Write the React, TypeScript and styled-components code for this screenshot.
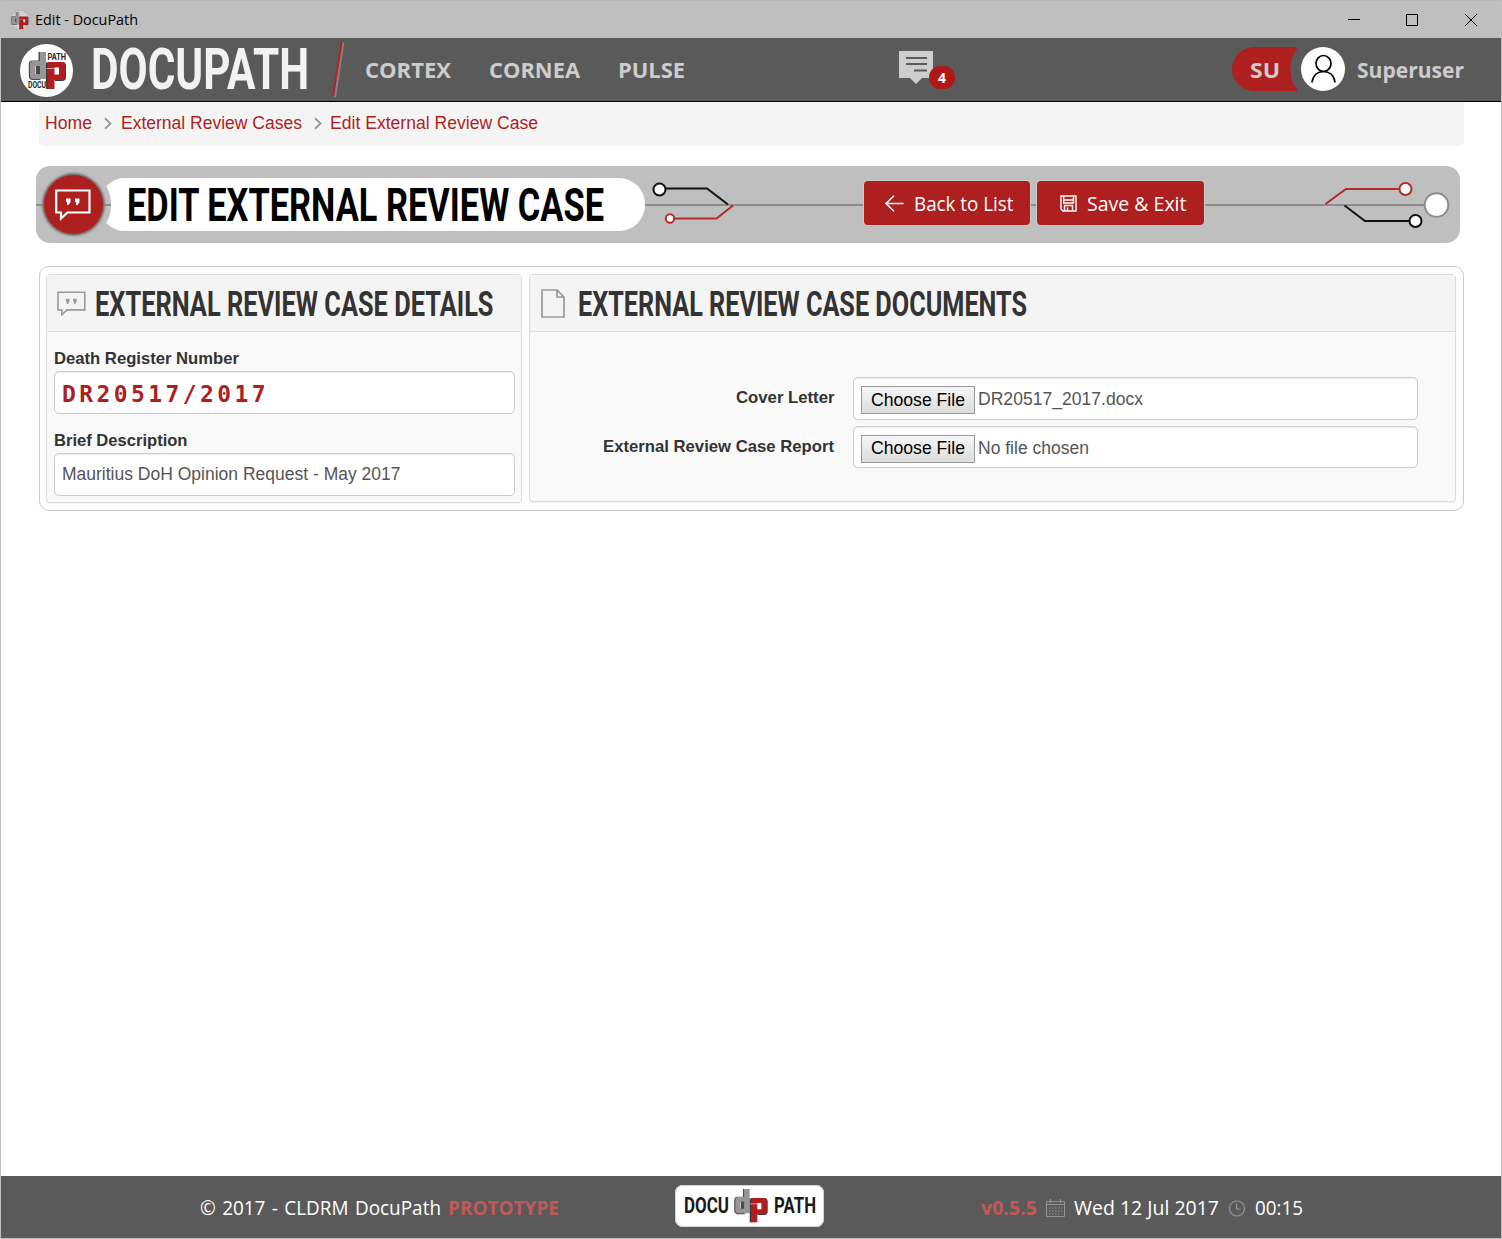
import React, { useLayoutEffect, useRef, useState } from "react";
import styled, { createGlobalStyle, css } from "styled-components";

const RED = "#ae1f1f";
const GREY = "#bfbfbf";
const ui = `"Open Sans", "Noto Sans", sans-serif`;
const arial = `"Liberation Sans", Arial, sans-serif`;
const display = `Roboto, "Liberation Sans", sans-serif`;

const GlobalStyle = createGlobalStyle`
  * { box-sizing: border-box; }
  body { margin: 0; background: #fff; font-family: ${arial}; }
`;

/* ---------- text that is squeezed to a given width ---------- */

const FitBox = styled.span<{ $width: number }>`
  display: block;
  flex: none;
  width: ${(p) => p.$width}px;
  white-space: nowrap;
`;
const FitInner = styled.span`
  display: inline-block;
  transform-origin: 0 50%;
`;

function Fit({ width, children }: { width: number; children: string }) {
  const ref = useRef<HTMLSpanElement>(null);
  const [scale, setScale] = useState(1);
  useLayoutEffect(() => {
    if (!ref.current) return;
    const natural = parseFloat(getComputedStyle(ref.current).width);
    if (natural > 0) setScale(width / natural);
  }, [width, children]);
  return (
    <FitBox $width={width}>
      <FitInner ref={ref} style={{ transform: `scaleX(${scale})` }}>
        {children}
      </FitInner>
    </FitBox>
  );
}

/* ---------- window ---------- */

const Window = styled.div`
  width: 1502px;
  height: 1239px;
  display: flex;
  flex-direction: column;
  border: 1px solid ${GREY};
  border-top-color: #b8b8b8;
  background: #fff;
  overflow: hidden;
`;
const TitleBar = styled.div`
  flex: none;
  height: 37px;
  display: flex;
  align-items: center;
  padding: 0 23px 0 9px;
  background: ${GREY};
  color: #000;
  font: 14px/20px ${ui};
`;
const WindowTitle = styled.div`
  margin-left: 5px;
  flex: 1;
`;
const WindowButtons = styled.div`
  display: flex;
  gap: 45px;
`;

const Header = styled.header`
  flex: none;
  height: 64px;
  display: flex;
  align-items: center;
  background: #5a5a5a;
  border-bottom: 1px solid #000;
  padding: 0 0 2px 18px;
  color: #cdcdcd;
  font: 700 22px/30px ${ui};
`;
const LogoSlot = styled.div`
  display: flex;
  margin-top: 3px;
`;
const Brand = styled.div`
  margin-left: 17px;
  margin-top: 1px;
  color: #f2f2f2;
  font: 700 58px/60px ${display};
`;
const SlashSlot = styled.div`
  display: flex;
  margin-left: 22px;
`;
const Nav = styled.nav`
  display: flex;
  gap: 38px;
  margin-left: 20px;
`;
const Messages = styled.div`
  position: relative;
  display: flex;
  margin-left: 214px;
  margin-top: -2px;
`;
const Badge = styled.span`
  position: absolute;
  left: 30px;
  top: 15px;
  width: 26px;
  height: 23px;
  border-radius: 12px;
  background: #b01717;
  color: #fff;
  font: 700 14px/23px ${ui};
  text-align: center;
`;
const User = styled.div`
  display: flex;
  align-items: center;
  margin-left: auto;
  padding-right: 37px;
`;
const Role = styled.div`
  width: 65px;
  height: 44px;
  padding: 7px 0 0 18px;
  border-radius: 22px 0 0 22px;
  background: radial-gradient(circle at 92px 50%, transparent 33.3px, ${RED} 34px);
`;
const Avatar = styled.div`
  width: 44px;
  height: 44px;
  margin: 0 12px 0 4px;
  border-radius: 50%;
  background: #fff;
  display: flex;
  align-items: center;
  justify-content: center;
`;

const Content = styled.main`
  flex: 1;
  padding: 0 37px 0 38px;
`;
const Breadcrumbs = styled.nav`
  height: 44px;
  display: flex;
  align-items: center;
  padding: 0 0 2px 6px;
  border-radius: 0 0 5px 5px;
  background: #f4f4f4;
  color: ${RED};
  font: 17.5px/22px ${arial};
`;
const Separator = styled.span`
  display: flex;
  margin-left: 12px;
  margin-right: 8.5px;
`;

/* ---------- title banner ---------- */

const Banner = styled.section`
  width: 1424px;
  height: 77px;
  margin: 20px 0 0 -3px;
  display: flex;
  align-items: center;
  border-radius: 14px;
  background: linear-gradient(#8c8c8c, #8c8c8c) 0 38px / 1390px 2px no-repeat ${GREY};
`;
const BannerIcon = styled.div`
  flex: none;
  width: 61px;
  height: 61px;
  margin-left: 7px;
  padding-right: 1px;
  border-radius: 50%;
  border: 1px solid #777;
  box-shadow: 0 0 2px 1px #777;
  background: ${RED};
  display: flex;
  align-items: center;
  justify-content: center;
`;
const BannerTitle = styled.h1`
  flex: none;
  width: 545px;
  height: 53px;
  margin: 0 0 0 -4px;
  padding-left: 27px;
  border-radius: 24px 26px 26px 24px / 26px;
  background: radial-gradient(circle at -27px 50%, transparent 37.5px, #fff 38.5px);
  color: #000;
  font: 700 47px/54px ${display};
`;
const Actions = styled.div`
  display: flex;
  gap: 7px;
  margin-left: 128px;
  margin-top: -3px;
`;
const Button = styled.button<{ $width: number }>`
  width: ${(p) => p.$width}px;
  height: 44px;
  padding: 1px 0 0 20px;
  display: flex;
  align-items: center;
  border: 0;
  border-radius: 4px;
  box-shadow: 0 0 0 1px #cacaca;
  background: ${RED};
  color: #fff;
  font: 19.5px/28px ${ui};
`;
const ButtonIcon = styled.span`
  display: flex;
  width: 29.5px;
`;
const CircuitEnd = styled.div`
  display: flex;
  margin-left: auto;
  margin-right: 10px;
`;

/* ---------- panels ---------- */

const Panels = styled.div`
  height: 245px;
  margin-top: 23px;
  padding: 7px 7px 0 6px;
  display: flex;
  align-items: flex-start;
  gap: 7px;
  border: 1px solid #ccc;
  border-radius: 10px;
`;
const Panel = styled.section<{ $width?: number }>`
  ${(p) => (p.$width ? css`flex: none; width: ${p.$width}px; height: 229px;` : css`flex: 1; height: 228px;`)}
  border: 1px solid #ddd;
  border-radius: 4px;
  background: #f9f9f9;
  box-shadow: 0 1px 1px rgba(0, 0, 0, 0.05);
`;
const PanelHead = styled.h2<{ $gap: number }>`
  height: 57px;
  margin: 0;
  display: flex;
  align-items: center;
  gap: ${(p) => p.$gap}px;
  padding: 1px 0 0 10px;
  border-bottom: 1px solid #ddd;
  background: #f4f4f4;
  color: #333;
  font: 700 35.5px/40px ${display};
`;
const FieldStack = styled.div`
  padding: 0 6px 0 7px;
`;
const Label = styled.label`
  display: block;
  color: #333;
  font: 700 16.5px/20px ${arial};
`;
const StackedLabel = styled(Label)`
  padding: 16px 0 3px;
  height: 39px;
`;
const Control = styled.div<{ $height: number }>`
  height: ${(p) => p.$height}px;
  display: flex;
  align-items: center;
  padding: 0 0 1px 7px;
  border: 1px solid #ccc;
  border-radius: 5px;
  background: #fff;
  box-shadow: inset 0 1px 1px rgba(0, 0, 0, 0.075);
  color: #555;
  font: 17.5px/22px ${arial};
`;
const CaseNumber = styled.span`
  margin-top: 4px;
  color: ${RED};
  font: 700 23px/28px "DejaVu Sans Mono", monospace;
  letter-spacing: 3.4px;
`;
const FileRows = styled.div`
  display: grid;
  grid-template-columns: 304px 565px;
  column-gap: 19px;
  row-gap: 6px;
  padding-top: 45px;
  align-items: center;
`;
const RowLabel = styled(Label)`
  display: flex;
  justify-content: flex-end;
  margin-bottom: 3px;
`;
const FileControl = styled(Control)`
  align-items: flex-start;
  padding: 0 0 0 7px;
`;
const ChooseFile = styled.span<{ $lift?: boolean }>`
  width: 114px;
  height: 28px;
  margin: 8px 3px 0 0;
  padding-left: 9px;
  border: 1px solid #999;
  background: linear-gradient(#f6f6f6, #dcdcdc);
  color: #000;
  line-height: ${(p) => (p.$lift ? 24 : 26)}px;
`;
const FileName = styled.span`
  margin-top: 10px;
`;

/* ---------- footer ---------- */

const Footer = styled.footer`
  flex: none;
  height: 62px;
  display: flex;
  align-items: center;
  padding-left: 199px;
  background: #5a5a5a;
  color: #fff;
  font: 19.5px/28px ${ui};
`;
const Strong = styled.strong`
  color: #c05a5a;
`;
const FooterText = styled.div`
  display: flex;
  gap: 7px;
  width: 475px;
  padding-top: 1px;
  word-spacing: 1.5px;
`;
const FooterLogo = styled.div`
  width: 149px;
  height: 42px;
  margin-top: -2px;
  display: flex;
  align-items: center;
  padding-left: 9px;
  border-radius: 8px;
  background: #fff;
  box-shadow: inset 0 0 0 1px #d4d4d4;
  color: #1a1a1a;
  font: 700 21.5px/28px ${display};
`;
const FooterInfo = styled.div`
  display: flex;
  align-items: center;
  gap: 9px;
  margin-left: 156.5px;
  padding-top: 1px;
`;

/* ---------- drawings ---------- */

const Monogram = () => (
  <g fillRule="evenodd">
    <path d="M10.500 0H12.500V28H4Q.8 27 .8 24V12Q.8 9 3.500 8.500H10.500zM5 14V22H8V14z" fill="#4a4a4a" />
    <path d="M12 0H18V27H5.500Q2 27 2 24V12Q2 9 5.500 9H12zM7.500 14V22H12V14z" fill="#969696" />
    <path d="M18 10.500V37H22V10.500zM34 10Q38 10 38 14V25Q38 29 34 29H27V27H34z" fill="#3a3a3a" />
    <path d="M19.500 10H34Q37 10 37 13V25Q37 28 34 28H26.500V37H19.500zM26.500 15.500V22.500H31V15.500z" fill="#b01f1f" />
    <path d="M18.500 16.500H26.500" stroke="#fff" strokeWidth=".8" opacity=".7" />
  </g>
);

const RoundLogo = () => (
  <svg width="55" height="55" viewBox="0 0 55 55">
    <circle cx="27.500" cy="27.500" r="26.500" fill="#fff" />
    <g transform="translate(9 9)"><Monogram /></g>
    <text x="28.500" y="16.500" fontFamily="Roboto" fontWeight="700" fontSize="8.500" textLength="18.500" lengthAdjust="spacingAndGlyphs" fill="#222">PATH</text>
    <text x="9" y="44.500" fontFamily="Roboto" fontWeight="700" fontSize="8.500" textLength="18" lengthAdjust="spacingAndGlyphs" fill="#222">DOCU</text>
  </svg>
);

const AppIcon = () => (
  <svg width="20" height="20" viewBox="0 0 20 20">
    <circle cx="10" cy="10" r="9.500" fill="#d2d2d2" stroke="#a6a6a6" strokeDasharray="2 1.500" />
    <g transform="translate(1 2) scale(.46)"><Monogram /></g>
  </svg>
);

const Slash = () => (
  <svg width="14" height="60" viewBox="0 0 14 60">
    <path d="M12.300 3L4 58" stroke="#858585" strokeWidth="2.200" />
    <path d="M10.800 2L2 57" stroke="#b52424" strokeWidth="2" />
  </svg>
);

const QuoteBubble = ({ color, width, stroke }: { color: string; width: number; stroke: number }) => (
  <svg width={width} height={(width * 32) / 36} viewBox="0 0 36 32" fill="none">
    <path d="M1.200 1.500H34.500V23.500H12.500L6 29.500V23.500H1.200Z" stroke={color} strokeWidth={stroke} />
    <path d="M11 9.500h4.500v3.500l-2 3h-1.500v-3H11zM20 9.500h4.500v3.500l-2 3H21v-3h-1z" fill={color} />
  </svg>
);

const Chevron = () => (
  <svg width="8" height="13" viewBox="0 0 8 13">
    <path d="M1 1.200L6.500 6.500L1 11.800" fill="none" stroke="#999" strokeWidth="1.900" />
  </svg>
);

export default function App() {
  return (
    <>
      <GlobalStyle />
      <Window>
        <TitleBar>
          <AppIcon />
          <WindowTitle><Fit width={103}>Edit - DocuPath</Fit></WindowTitle>
          <WindowButtons>
            <svg width="14" height="14"><path d="M2 6.500h12" stroke="#000" /></svg>
            <svg width="14" height="14"><path d="M1.500 1.500h11v11h-11z" fill="none" stroke="#000" /></svg>
            <svg width="14" height="14"><path d="M1 1l12 12M13 1L1 13" stroke="#000" /></svg>
          </WindowButtons>
        </TitleBar>

        <Header>
          <LogoSlot><RoundLogo /></LogoSlot>
          <Brand><Fit width={218}>DOCUPATH</Fit></Brand>
          <SlashSlot><Slash /></SlashSlot>
          <Nav>
            <Fit width={86}>CORTEX</Fit>
            <Fit width={91}>CORNEA</Fit>
            <Fit width={67}>PULSE</Fit>
          </Nav>
          <Messages>
            <svg width="36" height="34" viewBox="0 0 36 34">
              <path d="M0 0h34v27H23l-6 6-6-6H0z" fill="#cdcdcd" />
              <path d="M7 7h21M7 13h21M15 19.500h13" stroke="#5a5a5a" strokeWidth="1.800" />
            </svg>
            <Badge>4</Badge>
          </Messages>
          <User>
            <Role><Fit width={30}>SU</Fit></Role>
            <Avatar>
              <svg width="28" height="30" viewBox="0 0 28 30" fill="none" stroke="#000" strokeWidth="1.700">
                <ellipse cx="14.500" cy="9.500" rx="7.500" ry="8" />
                <path d="M3 28.500C4 21 9 17.500 14.500 17.500S25 21 26 28.500" />
              </svg>
            </Avatar>
            <Fit width={107}>Superuser</Fit>
          </User>
        </Header>

        <Content>
          <Breadcrumbs>
            <Fit width={47}>Home</Fit>
            <Separator><Chevron /></Separator>
            <Fit width={181}>External Review Cases</Fit>
            <Separator><Chevron /></Separator>
            <Fit width={208}>Edit External Review Case</Fit>
          </Breadcrumbs>

          <Banner>
            <BannerIcon><QuoteBubble color="#fff" width={36} stroke={2.2} /></BannerIcon>
            <BannerTitle><Fit width={477}>EDIT EXTERNAL REVIEW CASE</Fit></BannerTitle>
            <svg width="91" height="50" viewBox="0 0 91 50" fill="none" strokeWidth="2">
              <path d="M21 8.500H62L83 24.500" stroke="#111" />
              <circle cx="14.500" cy="9.500" r="6" fill="#fff" stroke="#111" />
              <path d="M30 38.500H71.500L88 25.500" stroke="#b52a2a" />
              <circle cx="25" cy="38.500" r="4.200" fill="#fff" stroke="#b52a2a" />
            </svg>
            <Actions>
              <Button $width={166}>
                <ButtonIcon>
                  <svg width="20" height="18" viewBox="0 0 20 18" fill="none" stroke="#fff" strokeWidth="1.500">
                    <path d="M19.500 8.500H2M10 .7L2 8.500l8 7.800" />
                  </svg>
                </ButtonIcon>
                <Fit width={99.5}>Back to List</Fit>
              </Button>
              <Button $width={167}>
                <ButtonIcon>
                  <svg width="22" height="18" viewBox="-3 0 22 18" fill="none" stroke="#fff" strokeWidth="1.400">
                    <path d="M1 1h15v15H3L1 14zM3.700 1v7h9.800V1M4.500 16v-5.500h8V16M7.500 12.500V16M3.700 5h9.800" />
                  </svg>
                </ButtonIcon>
                <Fit width={99.5}>Save &amp; Exit</Fit>
              </Button>
            </Actions>
            <CircuitEnd>
              <svg width="126" height="50" viewBox="0 0 126 50" fill="none" strokeWidth="2">
                <path d="M1.500 24L22 9H75" stroke="#b52a2a" />
                <circle cx="81.500" cy="9" r="6" fill="#fff" stroke="#b52a2a" />
                <path d="M20.500 25.500L41 41H85" stroke="#111" />
                <circle cx="91.500" cy="41" r="6" fill="#fff" stroke="#111" />
                <circle cx="112.500" cy="25" r="11.800" fill="#fff" stroke="#8c8c8c" />
              </svg>
            </CircuitEnd>
          </Banner>

          <Panels>
            <Panel $width={476}>
              <PanelHead $gap={9}>
                <QuoteBubble color="#999" width={29} stroke={2} />
                <Fit width={398.5}>EXTERNAL REVIEW CASE DETAILS</Fit>
              </PanelHead>
              <FieldStack>
                <StackedLabel><Fit width={185}>Death Register Number</Fit></StackedLabel>
                <Control $height={43}>
                  <CaseNumber><Fit width={207}>DR20517/2017</Fit></CaseNumber>
                </Control>
                <StackedLabel><Fit width={133.5}>Brief Description</Fit></StackedLabel>
                <Control $height={43}><Fit width={338.5}>Mauritius DoH Opinion Request - May 2017</Fit></Control>
              </FieldStack>
            </Panel>

            <Panel>
              <PanelHead $gap={12}>
                <svg width="26" height="29" viewBox="0 0 26 29" fill="none" stroke="#999" strokeWidth="1.700">
                  <path d="M2 1H17L24 8V28H2zM17 1V8H24" />
                </svg>
                <Fit width={449}>EXTERNAL REVIEW CASE DOCUMENTS</Fit>
              </PanelHead>
              <FileRows>
                <RowLabel><Fit width={98.5}>Cover Letter</Fit></RowLabel>
                <FileControl $height={43}>
                  <ChooseFile><Fit width={94}>Choose File</Fit></ChooseFile>
                  <FileName><Fit width={165}>DR20517_2017.docx</Fit></FileName>
                </FileControl>
                <RowLabel><Fit width={231}>External Review Case Report</Fit></RowLabel>
                <FileControl $height={42}>
                  <ChooseFile $lift><Fit width={94}>Choose File</Fit></ChooseFile>
                  <FileName><Fit width={111}>No file chosen</Fit></FileName>
                </FileControl>
              </FileRows>
            </Panel>
          </Panels>
        </Content>

        <Footer>
          <FooterText>
            <Fit width={241}>© 2017 - CLDRM DocuPath</Fit>
            <Strong><Fit width={111}>PROTOTYPE</Fit></Strong>
          </FooterText>
          <FooterLogo>
            <Fit width={45}>DOCU</Fit>
            <svg width="45" height="40" viewBox="-4.500 -3 45 40"><g transform="scale(.9)"><Monogram /></g></svg>
            <Fit width={42}>PATH</Fit>
          </FooterLogo>
          <FooterInfo>
            <Strong><Fit width={56}>v0.5.5</Fit></Strong>
            <svg width="19" height="18" viewBox="0 0 19 18" fill="none" stroke="#949494">
              <path d="M.5 2.500h18v15H.5zM.5 5.500h18M4.500 0v4M14.500 0v4" />
              <path d="M3 9h13M3 12h13M3 15h10" strokeDasharray="1.500 1.500" />
            </svg>
            <Fit width={145}>Wed 12 Jul 2017</Fit>
            <svg width="18" height="18" viewBox="0 0 18 18" fill="none" stroke="#949494" strokeWidth="1.200">
              <circle cx="9" cy="9.500" r="7.500" />
              <path d="M8.500 4.500V10H12.500" />
            </svg>
            <Fit width={48}>00:15</Fit>
          </FooterInfo>
        </Footer>
      </Window>
    </>
  );
}
